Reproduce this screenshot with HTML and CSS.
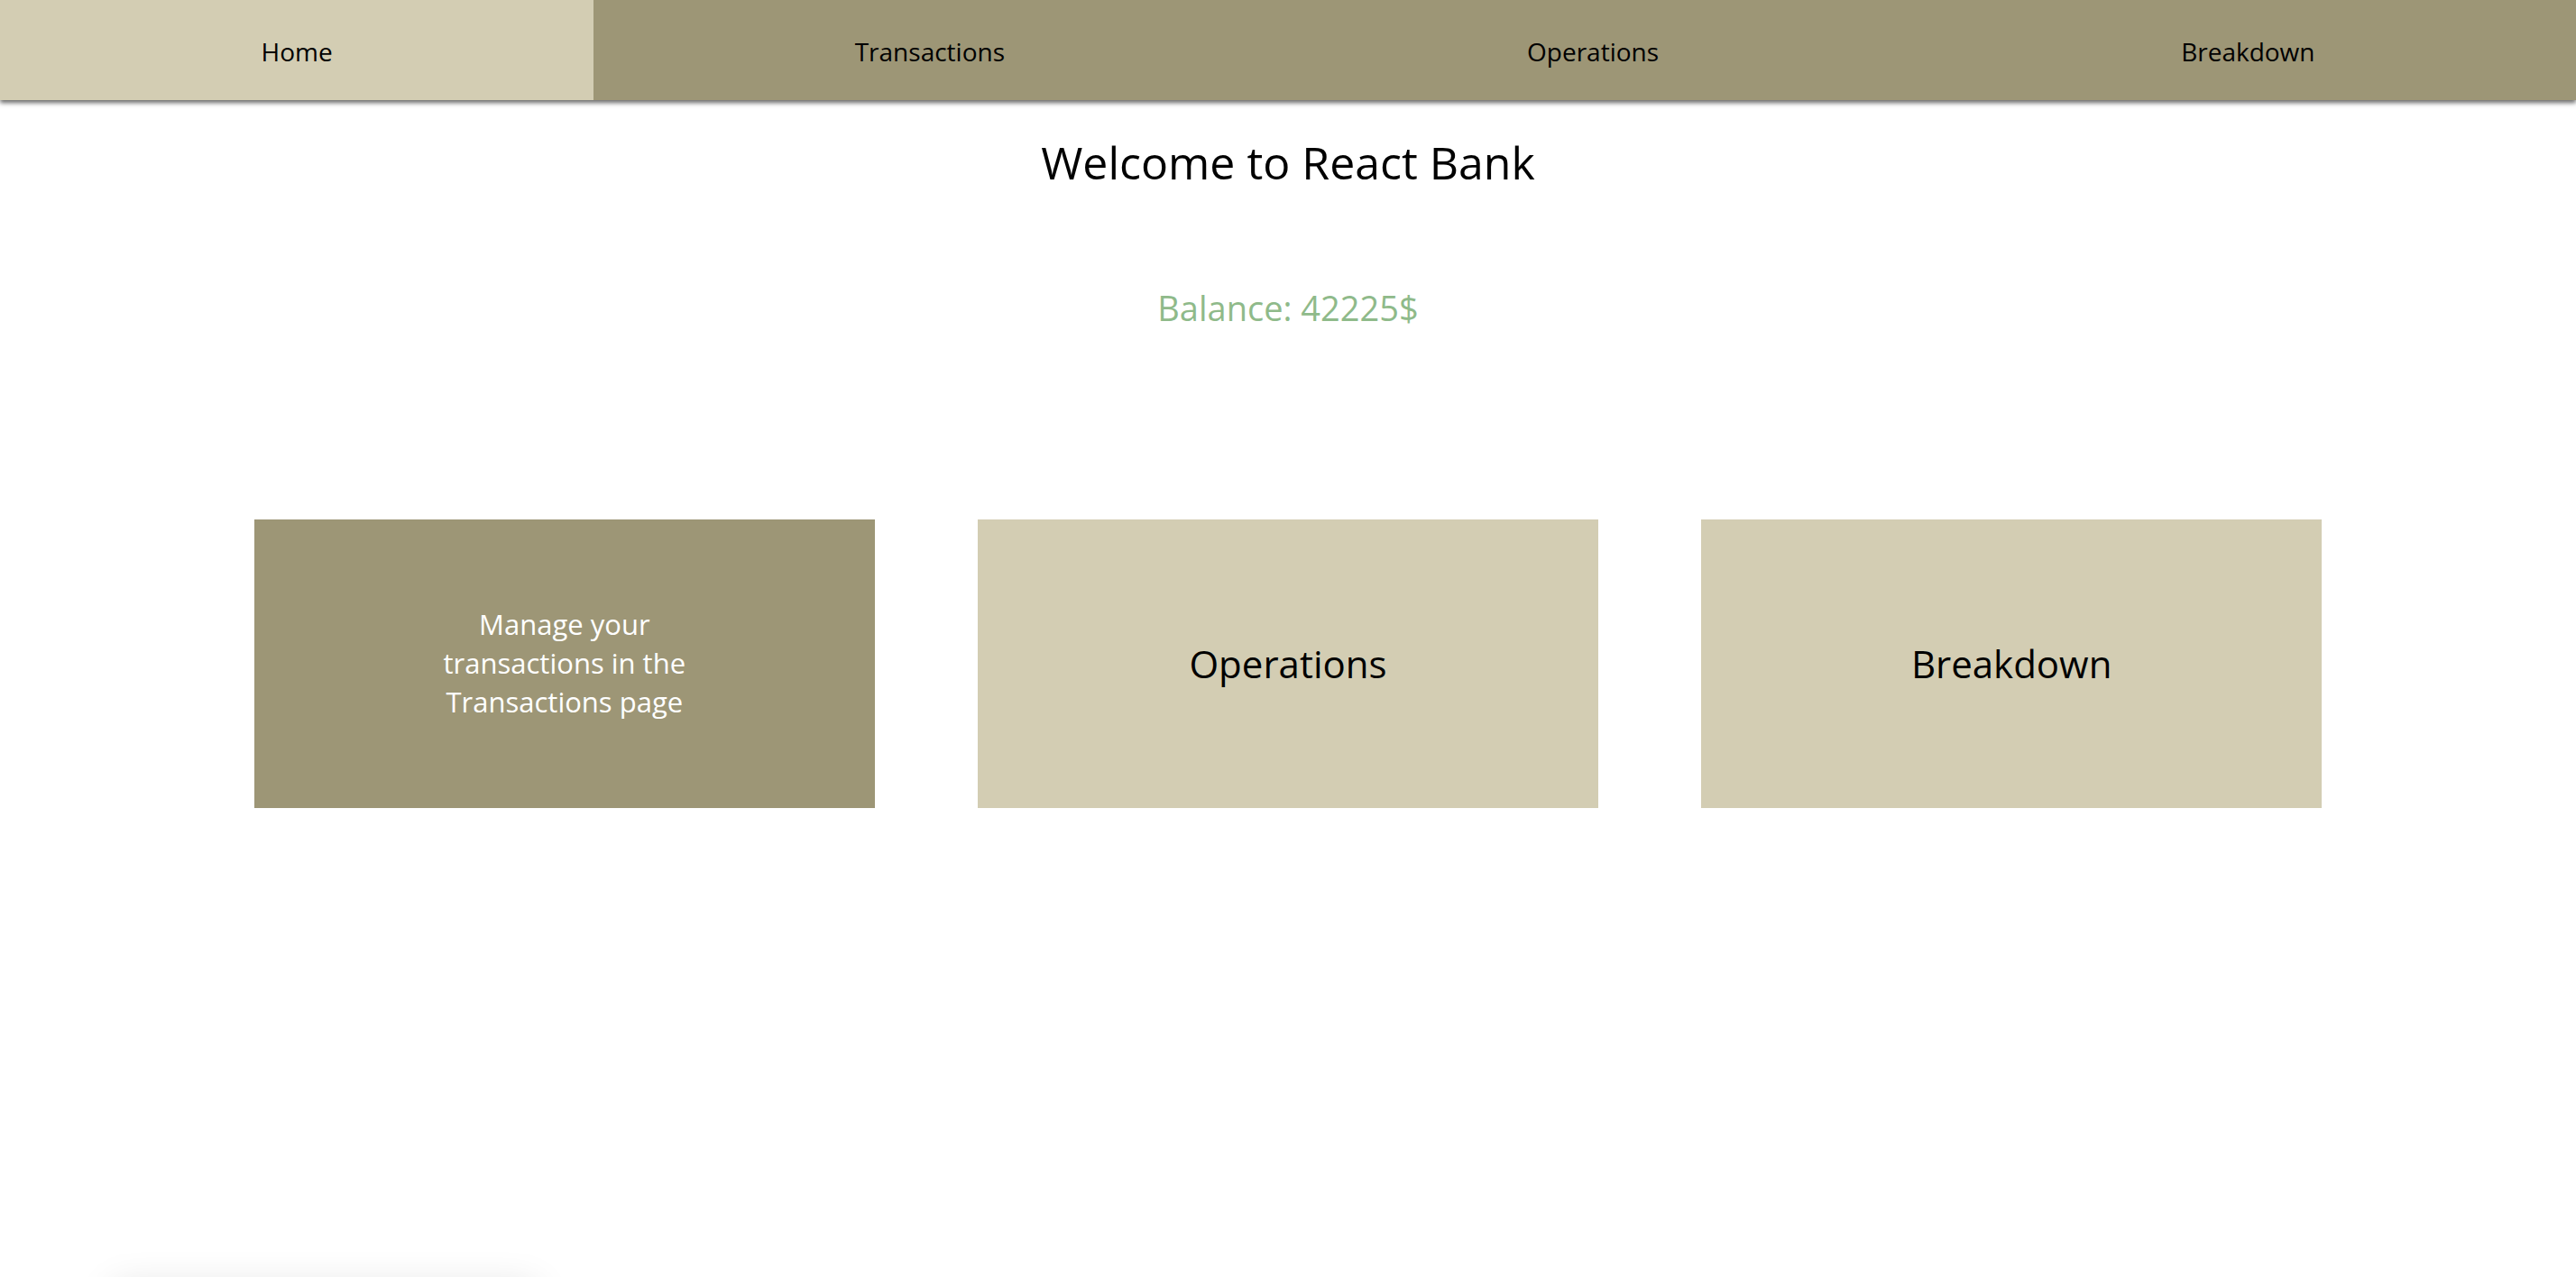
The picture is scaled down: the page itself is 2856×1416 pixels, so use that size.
FILE: index.html
```html
<!DOCTYPE html>
<html lang="en">
<head>
<meta charset="utf-8">
<title>React Bank</title>
<link rel="stylesheet" href="styles.css">
</head>
<body>
<nav class="nav">
  <a class="nav-item active" href="#">Home</a>
  <a class="nav-item" href="#">Transactions</a>
  <a class="nav-item" href="#">Operations</a>
  <a class="nav-item" href="#">Breakdown</a>
</nav>
<main class="main">
  <h1 class="title">Welcome to React Bank</h1>
  <div class="balance">Balance: 42225$</div>
  <section class="cards">
    <div class="card card-dark"><p class="card-text">Manage your transactions in the Transactions page</p></div>
    <div class="card card-light"><h2 class="card-title">Operations</h2></div>
    <div class="card card-light"><h2 class="card-title">Breakdown</h2></div>
  </section>
  <div class="below"></div>
</main>
</body>
</html>
```
FILE: styles.css
```css
html, body {
  margin: 0;
  padding: 0;
  background: #ffffff;
  font-family: "Open Sans", "Liberation Sans", sans-serif;
  color: #000;
}

.nav {
  display: flex;
  height: 111px;
  background: #9d9676;
  box-shadow: 0 3px 5px rgba(0, 0, 0, 0.6);
  position: relative;
  z-index: 2;
}

.nav-item {
  flex: 1 1 auto;
  display: flex;
  align-items: center;
  justify-content: center;
  padding-top: 2px;
  font-size: 28px;
  color: #000;
  text-decoration: none;
}

.nav-item.active {
  background: #d3cdb3;
}

.main {
  display: flex;
  flex-direction: column;
  align-items: center;
}

.title {
  margin: 35px 0 0;
  font-size: 50px;
  font-weight: 400;
  line-height: 1.362;
}

.balance {
  margin-top: 102px;
  font-size: 38px;
  color: #8fba8a;
  line-height: 1.362;
}

.cards {
  width: 80.25%;
  margin-top: 208px;
  display: flex;
  justify-content: space-between;
}

.card {
  width: 30%;
  height: 320px;
  display: flex;
  align-items: center;
  justify-content: center;
  text-align: center;
}

.card-dark {
  background: #9d9676;
  color: #fff;
}

.card-light {
  background: #d3cdb3;
}

.card-text {
  margin: 0;
  max-width: 290px;
  font-size: 31px;
  line-height: 43px;
}

.card-title {
  margin: 0;
  font-size: 42px;
  font-weight: 400;
}

.below {
  align-self: flex-start;
  margin: 530px 0 0 125px;
  width: 470px;
  height: 200px;
  background: #fff;
  box-shadow: 0 0 40px rgba(0, 0, 0, 0.12);
}
```
